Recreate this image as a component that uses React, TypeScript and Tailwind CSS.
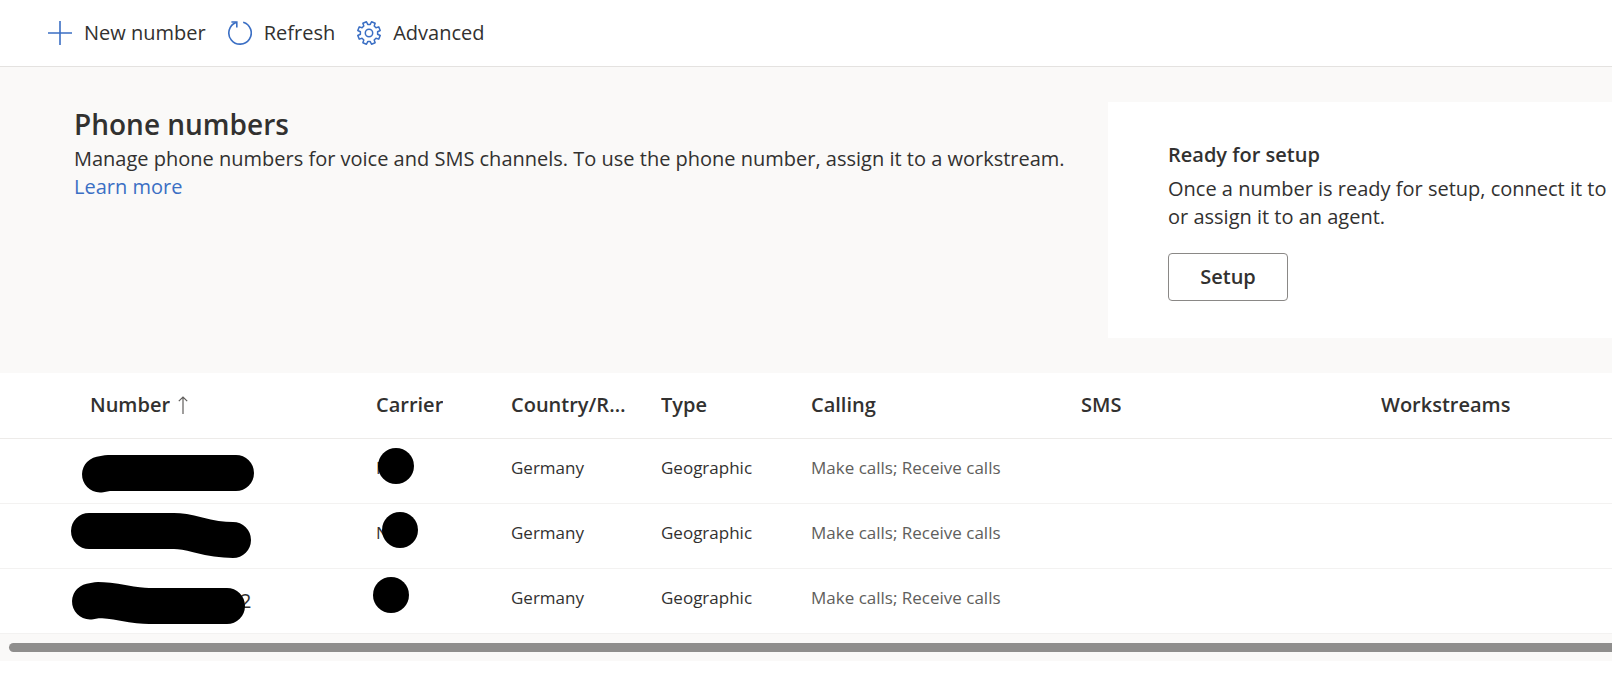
const columns = [
  { name: "Number", width: "w-[364px] pl-[90px] pr-3", sorted: true },
  { name: "Carrier", width: "w-[135px] px-3" },
  { name: "Country/Region", width: "w-[150px] pl-3 pr-5" },
  { name: "Type", width: "w-[150px] px-3" },
  { name: "Calling", width: "w-[270px] px-3" },
  { name: "SMS", width: "w-[300px] px-3" },
  { name: "Workstreams", width: "px-3" },
];

const rows = [
  { id: 1, digits: "", mask: "M34 35.5 L42 34 H170", cx: 32, cy: 27 },
  { id: 2, digits: "", mask: "M23 27 H108 C128 27 138 36 167 36", cx: 36, cy: 26 },
  { id: 3, digits: "2", mask: "M24 32.5 L32 31 C50 31 65 37 83 37 H161", cx: 27, cy: 26 },
];

function PlusIcon() {
  return (
    <svg width="24" height="24" viewBox="0 0 24 24" fill="none" stroke="#3b6fc4" strokeWidth="1.6" aria-hidden="true">
      <path d="M12 0V24M0 12H24" />
    </svg>
  );
}

function RefreshIcon() {
  return (
    <svg width="24" height="24" viewBox="0 0 24 24" fill="none" stroke="#3b6fc4" strokeWidth="1.6" aria-hidden="true">
      <path d="M15.2 1.2A11.2 11.2 0 1 1 8 1.5" />
      <path d="M3.4 1H8.8V6.4" />
    </svg>
  );
}

function GearIcon() {
  const teeth = 8;
  const points: string[] = [];
  for (let i = 0; i < teeth; i++) {
    const base = (i / teeth) * Math.PI * 2 + Math.PI / 8;
    const steps: [number, number][] = [
      [-0.25, 8.7],
      [-0.17, 11.5],
      [0.17, 11.5],
      [0.25, 8.7],
    ];
    for (const [offset, radius] of steps) {
      const angle = base + offset;
      points.push(`${(12 + radius * Math.cos(angle)).toFixed(2)},${(12 + radius * Math.sin(angle)).toFixed(2)}`);
    }
  }
  return (
    <svg width="24" height="24" viewBox="0 0 24 24" fill="none" stroke="#3b6fc4" strokeWidth="1.5" strokeLinejoin="round" aria-hidden="true">
      <polygon points={points.join(" ")} />
      <circle cx="12" cy="12" r="3.7" />
    </svg>
  );
}

export default function App() {
  return (
    <div className="overflow-x-hidden bg-white font-['Open_Sans',sans-serif] text-xl leading-7 text-[#323130]">
      <nav className="flex h-[67px] items-center gap-[22px] border-b border-[#e4e2e0] px-12">
        <button className="flex items-center gap-3">
          <PlusIcon />
          <span>New number</span>
        </button>
        <button className="flex items-center gap-3">
          <RefreshIcon />
          <span>Refresh</span>
        </button>
        <button className="flex items-center gap-3">
          <GearIcon />
          <span>Advanced</span>
        </button>
      </nav>

      <header className="flex items-start bg-[#faf9f8] py-[35px] pl-[74px]">
        <div className="min-w-0 flex-1 pt-1">
          <h1 className="text-[28px] leading-9 font-semibold">Phone numbers</h1>
          <p className="mt-[3px] whitespace-nowrap">
            Manage phone numbers for voice and SMS channels. To use the phone number, assign it to a workstream.
          </p>
          <a href="#learn" className="text-[#3b6fc4]">
            Learn more
          </a>
        </div>
        <section className="w-[504px] shrink-0 bg-white pt-[39px] pb-[37px] pl-15">
          <h2 className="font-semibold">Ready for setup</h2>
          <p className="mt-1.5 whitespace-nowrap">
            Once a number is ready for setup, connect it to a
            <br />
            or assign it to an agent.
          </p>
          <button className="mt-[22px] block h-12 w-30 rounded-sm border border-[#8a8886] font-semibold">Setup</button>
        </section>
      </header>

      <div className="overflow-x-hidden">
        <table className="w-full min-w-[1612px] table-fixed border-collapse text-left">
          <thead>
            <tr className="h-[65px] border-b border-[#edebe9]">
              {columns.map((c) => (
                <th key={c.name} scope="col" className={`${c.width} font-semibold`}>
                  <div className="flex items-center gap-2">
                    <span className="truncate">{c.name}</span>
                    {c.sorted && (
                      <svg width="10" height="18" viewBox="0 0 10 18" fill="none" stroke="#605e5c" strokeWidth="1.2" aria-hidden="true">
                        <path d="M5 18V1M0.8 5.2L5 1L9.2 5.2" />
                      </svg>
                    )}
                  </div>
                </th>
              ))}
            </tr>
          </thead>
          <tbody className="text-[17px] leading-6">
            {rows.map((r) => (
              <tr key={r.id} className="h-[65px] border-b border-[#f3f2f1]">
                <td className="relative pr-3 pl-[90px]">
                  <div className="pl-[150px] text-xl">{r.digits}</div>
                  <svg className="absolute top-0 left-[66px]" width="200" height="64" fill="none" stroke="#000" strokeWidth="36" strokeLinecap="round" strokeLinejoin="round" aria-hidden="true">
                    <path d={r.mask} />
                  </svg>
                </td>
                <td className="relative px-3 pb-1.5">
                  N
                  <svg className="absolute top-0 left-0" width="60" height="64" aria-hidden="true">
                    <circle cx={r.cx} cy={r.cy} r="18" />
                  </svg>
                </td>
                <td className="px-3 pb-1.5">Germany</td>
                <td className="px-3 pb-1.5">Geographic</td>
                <td className="px-3 pb-1.5 text-[#605e5c]">Make calls; Receive calls</td>
                <td />
                <td />
              </tr>
            ))}
          </tbody>
        </table>
        <div className="bg-[#faf9f8] py-[9px] pl-[9px]">
          <div className="h-[9px] rounded-l-full bg-[#8f8e8d]" />
        </div>
      </div>
    </div>
  );
}
